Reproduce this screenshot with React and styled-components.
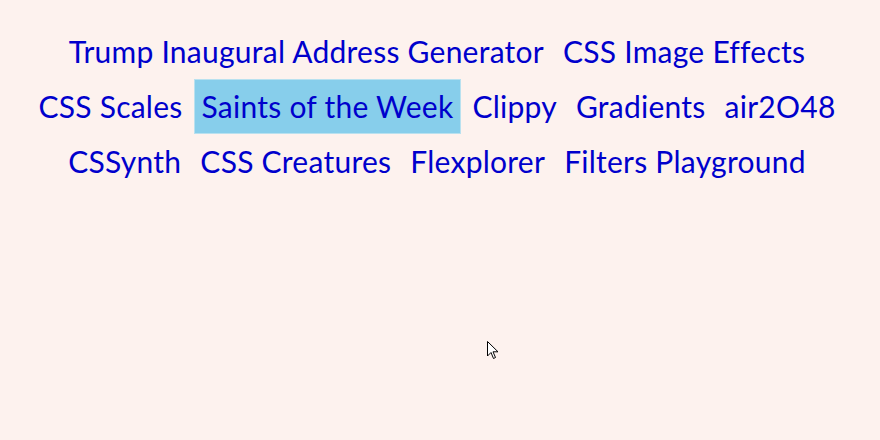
import React from 'react'
import styled, { createGlobalStyle } from 'styled-components'

const Global = createGlobalStyle`
    html, body {
        margin: 0;
        background: #fdf2ee;
    }
    body {
        font-family: "Lato", "Open Sans", sans-serif;
    }
`

const Page = styled.div`
    position: relative;
    height: 440px;
    padding-top: 24px;
    box-sizing: border-box;
`

const Nav = styled.nav`
    display: flex;
    flex-wrap: wrap;
    justify-content: center;
    column-gap: 3px;
    padding: 0 6px 0 0;
    font-size: 30px;
    letter-spacing: 0.25px;
    line-height: 53px;
`

const Item = styled.a`
    display: block;
    padding: 0 7px;
    color: #0000cc;
    text-decoration: none;
    white-space: nowrap;
    border: 1px solid ${p => (p.$active ? '#b9e1ef' : 'transparent')};
    background: ${p => (p.$active ? '#87ceeb' : 'transparent')};
`

const Cursor = styled.svg`
    position: absolute;
    left: 487px;
    top: 341px;
`

const links = [
    'Trump Inaugural Address Generator',
    'CSS Image Effects',
    'CSS Scales',
    'Saints of the Week',
    'Clippy',
    'Gradients',
    'air2O48',
    'CSSynth',
    'CSS Creatures',
    'Flexplorer',
    'Filters Playground',
]

const App = () => (
    <Page>
        <Global />
        <Nav>
            {links.map(l => (
                <Item key={l} href="#" $active={l === 'Saints of the Week'}>{l}</Item>
            ))}
        </Nav>
        <Cursor width="12" height="19" viewBox="0 0 12 19">
            <path d="M0.5 0.5 L0.5 15 L4 11.5 L6.5 17.5 L8.5 16.5 L6 10.8 L11 10.8 Z" fill="#fff" stroke="#000" strokeWidth="1" />
        </Cursor>
    </Page>
)

export default App
